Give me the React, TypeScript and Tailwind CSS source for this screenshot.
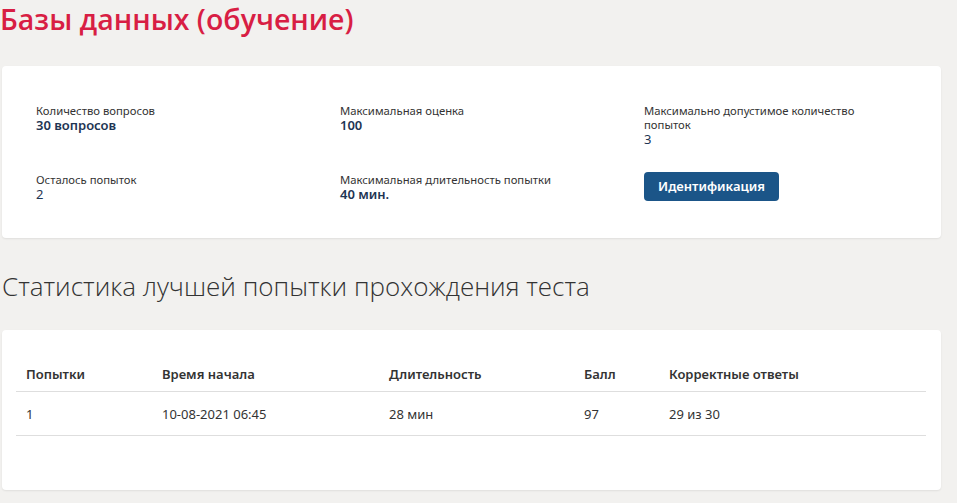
import React from "react";

const body = { fontFamily: '"Noto Sans", "Open Sans", sans-serif' };

function Info({ label, value, bold = true }: { label: React.ReactNode; value: string; bold?: boolean }) {
  return (
    <div className="flex flex-col">
      <div className="text-[11.3px] leading-[14px] text-[#333]">{label}</div>
      <div className={`text-[13px] leading-[15px] text-[#1e3553] ${bold ? "font-semibold" : ""}`}>{value}</div>
    </div>
  );
}

export default function App() {
  const rows = [["1", "10-08-2021 06:45", "28 мин", "97", "29 из 30"]];
  return (
    <div className="min-h-[503px] w-[957px] bg-[#f2f1ef] overflow-hidden" style={body}>
      <h1
        className="text-[28.5px] leading-[36px] font-semibold text-[#d81e44] pt-[1px] pl-0"
        style={{ fontFamily: '"Open Sans", sans-serif' }}
      >
        Базы данных (обучение)
      </h1>

      <div className="ml-[2px] mt-[29px] w-[939px] h-[172px] bg-white rounded-[4px] shadow-[0_1px_2px_rgba(0,0,0,0.08)] pl-[34px] pt-[38px]">
        <div className="grid grid-cols-[304px_304px_240px] gap-y-[26px]">
          <Info label="Количество вопросов" value="30 вопросов" />
          <Info label="Максимальная оценка" value="100" />
          <Info label={<>Максимально допустимое количество<br />попыток</>} value="3" bold={false} />
          <Info label="Осталось попыток" value="2" bold={false} />
          <Info label="Максимальная длительность попытки" value="40 мин." />
          <div>
            <button className="-mt-[2px] h-[29px] w-[135px] rounded-[4px] bg-[#1b5588] text-white text-[13px] font-semibold">
              Идентификация
            </button>
          </div>
        </div>
      </div>

      <h2
        className="mt-[32px] ml-[2px] text-[26px] leading-[32px] font-light text-[#333]"
        style={{ fontFamily: '"Open Sans", sans-serif' }}
      >
        Статистика лучшей попытки прохождения теста
      </h2>

      <div className="ml-[2px] mt-[28px] w-[939px] h-[160px] bg-white rounded-[4px] shadow-[0_1px_2px_rgba(0,0,0,0.08)] px-[14px] pt-[27px]">
        <table className="w-[910px] text-left text-[13px] leading-[18px] text-[#333]">
          <thead>
            <tr className="border-b border-[#dedede]">
              <th className="font-semibold pt-[8px] pb-[8px] pl-[10px] w-[146px]">Попытки</th>
              <th className="font-semibold pt-[8px] pb-[8px] w-[227px]">Время начала</th>
              <th className="font-semibold pt-[8px] pb-[8px] w-[195px]">Длительность</th>
              <th className="font-semibold pt-[8px] pb-[8px] w-[85px]">Балл</th>
              <th className="font-semibold pt-[8px] pb-[8px]">Корректные ответы</th>
            </tr>
          </thead>
          <tbody>
            {rows.map((r, i) => (
              <tr key={i} className="border-b border-[#dedede]">
                <td className="pt-[13px] pb-[12px] pl-[10px]">{r[0]}</td>
                <td className="pt-[13px] pb-[12px]">{r[1]}</td>
                <td className="pt-[13px] pb-[12px]">{r[2]}</td>
                <td className="pt-[13px] pb-[12px]">{r[3]}</td>
                <td className="pt-[13px] pb-[12px]">{r[4]}</td>
              </tr>
            ))}
          </tbody>
        </table>
      </div>
    </div>
  );
}
